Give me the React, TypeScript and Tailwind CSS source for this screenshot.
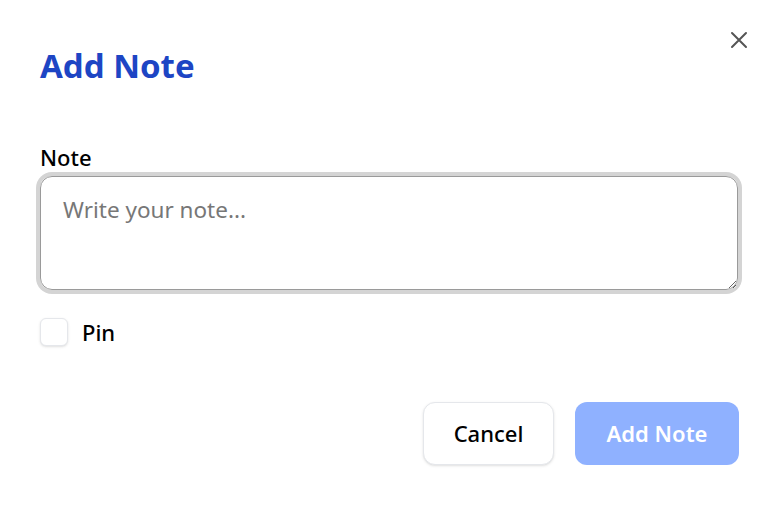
import React from 'react';

const font = { fontFamily: '"Noto Sans", "Open Sans", sans-serif' };

export default function App() {
    return (
        <div className="w-[779px] h-[505px] bg-white relative" style={font}>
            <button className="absolute right-[31px] top-[31px] text-[#555]" aria-label="Close">
                <svg width="18" height="18" viewBox="0 0 18 18" fill="none" stroke="currentColor" strokeWidth="2" strokeLinecap="round">
                    <path d="M2 2 L16 16 M16 2 L2 16" />
                </svg>
            </button>
            <div className="px-10 pt-[44px]">
                <h2 className="text-[33px] leading-[44px] font-bold text-[#1d45c4]">Add Note</h2>

                <label className="block mt-[54px] text-[22px] leading-[30px] font-medium text-black">Note</label>
                <textarea
                    placeholder="Write your note..."
                    className="mt-[4px] block w-[698px] h-[114px] rounded-xl border border-[#9a9a9a] px-[22px] pt-[18px] pb-[10px] text-[22.5px] leading-[30px] outline-none ring-4 ring-[#d4d4d4] placeholder:text-[#777] resize-y"
                />

                <div className="mt-[27px] flex items-center gap-[14px]">
                    <span className="w-[28px] h-[28px] rounded-md border border-gray-200 shadow-sm bg-white" />
                    <span className="text-[22px] leading-[30px] font-medium text-black">Pin</span>
                </div>

                <div className="mt-[55px] flex justify-end gap-[21px]">
                    <button className="w-[131px] h-[63px] rounded-xl border border-gray-200 bg-white text-[22px] font-medium text-black shadow-sm">
                        Cancel
                    </button>
                    <button className="w-[164px] h-[63px] rounded-xl bg-[#8fb1ff] text-[22px] font-semibold text-white">
                        Add Note
                    </button>
                </div>
            </div>
        </div>
    );
}
